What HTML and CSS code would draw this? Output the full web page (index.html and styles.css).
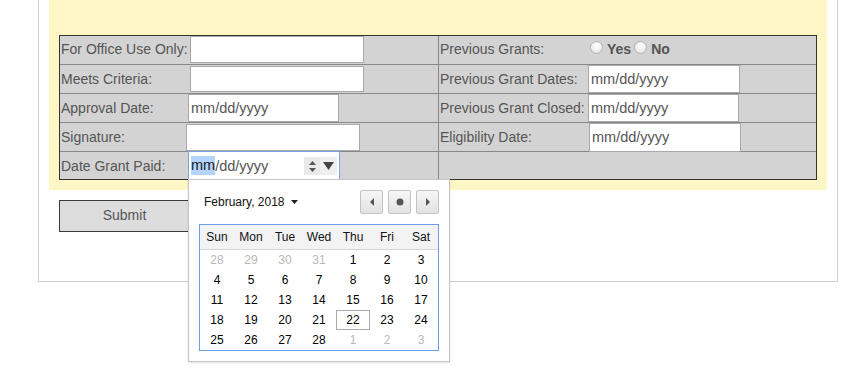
FILE: index.html
```html
<!DOCTYPE html>
<html>
<head>
<meta charset="utf-8">
<title>Grant Form</title>
<link rel="stylesheet" href="styles.css">
</head>
<body>
<div class="page">
  <div class="panel">
    <div class="tbl">
      <div class="cell cell-l first"><span class="lbl lbl-l">For Office Use Only:</span><span class="field f-text h27 ml2"></span></div>
      <div class="cell first"><span class="lbl lbl-r">Previous Grants:</span><span class="radios"><span class="radio"></span><b class="opt">Yes</b><span class="radio r2"></span><b class="opt">No</b></span></div>

      <div class="cell cell-l"><span class="lbl lbl-l">Meets Criteria:</span><span class="field f-text ml2"></span></div>
      <div class="cell"><span class="lbl lbl-r">Previous Grant Dates:</span><span class="field f-date w152">mm/dd/yyyy</span></div>

      <div class="cell cell-l"><span class="lbl lbl-l">Approval Date:</span><span class="field f-date">mm/dd/yyyy</span></div>
      <div class="cell"><span class="lbl lbl-r">Previous Grant Closed:</span><span class="field f-date">mm/dd/yyyy</span></div>

      <div class="cell cell-l"><span class="lbl lbl-l">Signature:</span><span class="field f-text h27 mlm2"></span></div>
      <div class="cell"><span class="lbl lbl-r">Eligibility Date:</span><span class="field f-date w152 h29 ml1">mm/dd/yyyy</span></div>

      <div class="cell cell-l last"><span class="lbl lbl-l">Date Grant Paid:</span>
        <span class="focus-wrap">
          <span class="field f-date f-focus"><span class="sel">mm</span>/dd/yyyy
            <span class="spin"><svg width="9" height="14" viewBox="0 0 9 14"><path d="M4.5 2 L8 6 L1 6 Z" fill="#555"/><path d="M1 9 L8 9 L4.5 13 Z" fill="#555"/></svg></span>
            <span class="drop"><svg width="11" height="8" viewBox="0 0 11 8"><path d="M0 0 L11 0 L5.5 8 Z" fill="#444"/></svg></span>
          </span>
          <div class="picker">
            <div class="picker-head">
              <span class="month">February, 2018<svg class="caret" width="7" height="4" viewBox="0 0 7 4"><path d="M0 0 L7 0 L3.5 4 Z" fill="#222"/></svg></span>
              <span class="navs">
                <span class="nav"><svg width="6" height="8" viewBox="0 0 6 8"><path d="M5 0 L5 8 L1 4 Z" fill="#555"/></svg></span>
                <span class="nav"><svg width="8" height="8" viewBox="0 0 8 8"><circle cx="4" cy="4" r="3.5" fill="#555"/></svg></span>
                <span class="nav"><svg width="6" height="8" viewBox="0 0 6 8"><path d="M1 0 L1 8 L5 4 Z" fill="#555"/></svg></span>
              </span>
            </div>
            <div class="cal">
              <span class="hd">Sun</span><span class="hd">Mon</span><span class="hd">Tue</span><span class="hd">Wed</span><span class="hd">Thu</span><span class="hd">Fri</span><span class="hd">Sat</span>
              <span class="d out">28</span><span class="d out">29</span><span class="d out">30</span><span class="d out">31</span><span class="d">1</span><span class="d">2</span><span class="d">3</span>
              <span class="d">4</span><span class="d">5</span><span class="d">6</span><span class="d">7</span><span class="d">8</span><span class="d">9</span><span class="d">10</span>
              <span class="d">11</span><span class="d">12</span><span class="d">13</span><span class="d">14</span><span class="d">15</span><span class="d">16</span><span class="d">17</span>
              <span class="d">18</span><span class="d">19</span><span class="d">20</span><span class="d">21</span><span class="d today">22</span><span class="d">23</span><span class="d">24</span>
              <span class="d">25</span><span class="d">26</span><span class="d">27</span><span class="d">28</span><span class="d out">1</span><span class="d out">2</span><span class="d out">3</span>
            </div>
          </div>
        </span>
      </div>
      <div class="cell last"></div>
    </div>
  </div>
  <button class="submit" type="button">Submit</button>
</div>
</body>
</html>
```

FILE: styles.css
```css
html, body {
  margin: 0;
  padding: 0;
  background: #fff;
}
html { min-height: 387px; }
body {
  min-height: 387px;
  font-family: "Liberation Sans", Arial, sans-serif;
  font-size: 14px;
  color: #555;
}
.page {
  margin-left: 38px;
  width: 800px;
  box-sizing: border-box;
  border: 1px solid #d0d0d0;
  border-top: 0;
  padding: 0 10px 49px;
}
.panel {
  background: #fef6c4;
  padding: 35px 10px 10px;
}
.tbl {
  display: grid;
  grid-template-columns: 379px 1fr;
  border: 1px solid #333;
  background: #d3d3d3;
}
.cell {
  height: 29px;
  box-sizing: border-box;
  border-bottom: 1px solid #888;
  display: flex;
  align-items: center;
  padding-left: 1px;
}
.cell.first {
  padding-bottom: 2px;
}
.cell-l {
  border-right: 1px solid #888;
}
.cell.last {
  border-bottom: 0;
  height: 27px;
}
.lbl {
  flex: none;
  white-space: nowrap;
}
.lbl-l { width: 127px; }
.lbl-r { width: 148px; }
.field {
  flex: none;
  box-sizing: border-box;
  background: #fff;
  border: 1px solid #a9a9a9;
  height: 26px;
  display: flex;
  align-items: center;
  padding-left: 2px;
  font-size: 14.5px;
  color: #555;
  white-space: nowrap;
}
.f-text { width: 174px; }
.f-date { width: 151px; height: 28px; }
.w152 { width: 152px; }
.h27 { height: 27px; }
.h29 { height: 29px; }
.ml2 { margin-left: 2px; }
.ml1 { margin-left: 1px; }
.mlm2 { margin-left: -2px; }
.radios {
  display: flex;
  align-items: center;
}
.radio {
  width: 13px;
  height: 13px;
  box-sizing: border-box;
  border-radius: 50%;
  border: 1px solid #b4b4b4;
  background: radial-gradient(circle at 50% 35%, #fff 0, #f2f2f2 45%, #dcdcdc 100%);
  margin: 0 4px 3px 2px;
}
.radio.r2 { margin-left: 3px; }
.opt {
  font-weight: bold;
  color: #555;
}
.focus-wrap {
  position: relative;
  display: flex;
}
.f-focus {
  width: 152px;
  height: 29px;
  border-color: #7ea3de;
  position: relative;
}
.sel {
  background: #b3d4fc;
  color: #1a1a1a;
  line-height: 19px;
}
.spin {
  margin-left: auto;
  width: 16px;
  height: 18px;
  background: #e9e9e9;
  display: flex;
  align-items: center;
  justify-content: center;
}
.drop {
  width: 17px;
  height: 18px;
  margin-right: 2px;
  background: #efefef;
  display: flex;
  align-items: center;
  justify-content: center;
}
.picker {
  position: absolute;
  top: calc(100% - 1px);
  left: 0;
  z-index: 5;
  width: 262px;
  box-sizing: border-box;
  background: #fff;
  border: 1px solid #c6c6c6;
  box-shadow: 0 1px 2px rgba(0,0,0,0.12);
  padding: 10px;
  color: #111;
  font-size: 12px;
}
.picker-head {
  height: 24px;
  display: flex;
  align-items: center;
  justify-content: space-between;
  margin-bottom: 10px;
}
.month {
  padding-left: 5px;
  display: flex;
  align-items: center;
  color: #111;
}
.caret { margin-left: 6px; }
.navs {
  display: flex;
  gap: 5px;
}
.nav {
  width: 23px;
  height: 24px;
  box-sizing: border-box;
  border: 1px solid #c4c4c4;
  border-radius: 2px;
  background: linear-gradient(#f6f6f6, #e2e2e2);
  display: flex;
  align-items: center;
  justify-content: center;
}
.cal {
  display: grid;
  grid-template-columns: repeat(7, 1fr);
  border: 1px solid #6d9de8;
}
.hd {
  height: 25px;
  box-sizing: border-box;
  border-bottom: 1px solid #d6d6d6;
  background: #f3f3f3;
  display: flex;
  align-items: center;
  justify-content: center;
  color: #111;
}
.d {
  height: 20px;
  box-sizing: border-box;
  display: flex;
  align-items: center;
  justify-content: center;
  color: #000;
}
.d.out { color: #b8b8b8; }
.d.today { border: 1px solid #aaa; }
.submit {
  display: block;
  margin: 10px 0 0 10px;
  width: 131px;
  height: 32px;
  box-sizing: border-box;
  background: #ddd;
  border: 1px solid #3a3a3a;
  border-radius: 0;
  font-family: "Liberation Sans", Arial, sans-serif;
  font-size: 14px;
  color: #555;
  padding: 0 0 2px;
}
```
